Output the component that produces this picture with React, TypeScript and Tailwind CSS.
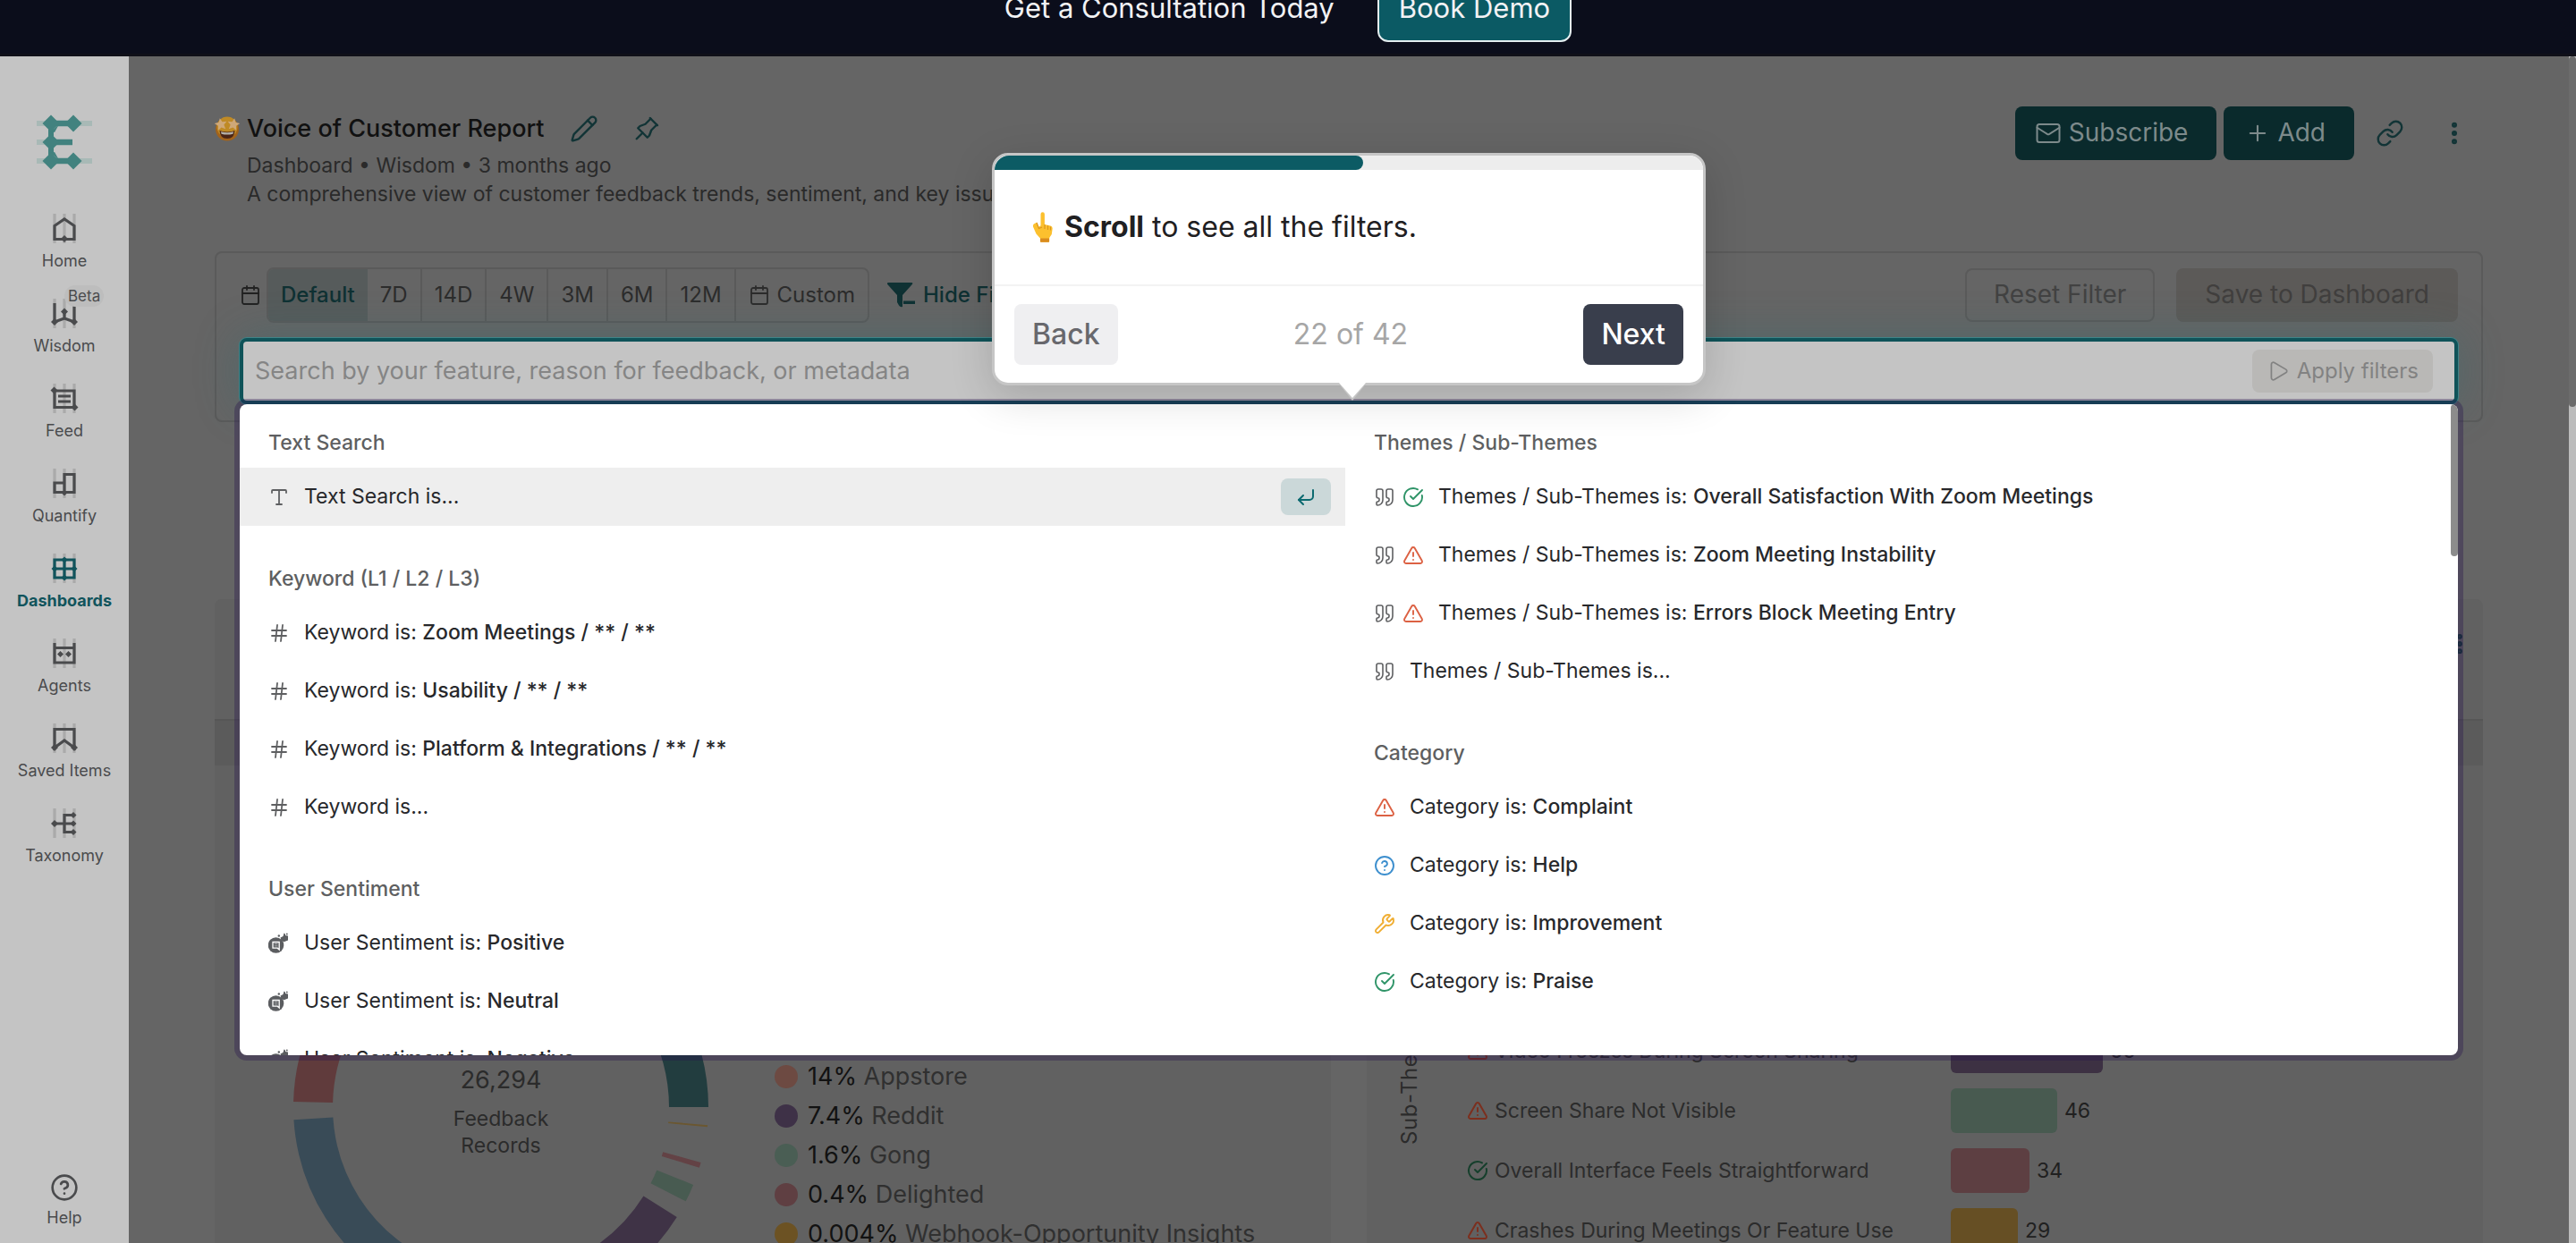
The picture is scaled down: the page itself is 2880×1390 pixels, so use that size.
import React from "react";
import {
  Calendar,
  CircleCheckBig,
  CircleQuestionMark,
  CornerDownLeft,
  EllipsisVertical,
  Hash,
  Link,
  Mail,
  Pencil,
  Play,
  Plus,
  Quote,
  TriangleAlert,
  Type,
  Wrench,
} from "lucide-react";
import { TbPin } from "react-icons/tb";

/* ---------- icons ---------- */

function Diamond({ x, y, r = 4 }: { x: number; y: number; r?: number }) {
  return <path d={`M${x} ${y - r}L${x + r} ${y}L${x} ${y + r}L${x - r} ${y}Z`} fill="currentColor" stroke="none" />;
}

function GuideIcon({ children }: { children: React.ReactNode }) {
  return (
    <svg viewBox="0 0 36 36" className="size-9" fill="none" stroke="currentColor" strokeWidth="3.2" aria-hidden="true">
      <path d="M7 1V34M18 1V34M29 1V34" stroke="#aaaaaa" />
      {children}
    </svg>
  );
}

const navItems: { label: string; active?: boolean; badge?: string; icon: React.ReactNode }[] = [
  {
    label: "Home",
    icon: (
      <GuideIcon>
        <path d="M7 29.5V14.5L18 7L29 14.5V29.5Z" />
        <Diamond x={18} y={29} />
      </GuideIcon>
    ),
  },
  {
    label: "Wisdom",
    badge: "Beta",
    icon: (
      <GuideIcon>
        <path d="M7 6V27L18 23L29 27V6M18 16V24" />
        <Diamond x={7} y={27} />
        <Diamond x={29} y={27} />
        <Diamond x={18} y={15.5} />
      </GuideIcon>
    ),
  },
  {
    label: "Feed",
    icon: (
      <GuideIcon>
        <path d="M7 9H29V27.5H7ZM11 15H25M11 21H25" />
        <Diamond x={6.5} y={8.5} />
        <Diamond x={29.5} y={27.5} />
      </GuideIcon>
    ),
  },
  {
    label: "Quantify",
    icon: (
      <GuideIcon>
        <path d="M18 17H7V27.5H29V7.5H18V27.5" />
        <Diamond x={18} y={28.5} r={3} />
      </GuideIcon>
    ),
  },
  {
    label: "Dashboards",
    active: true,
    icon: (
      <GuideIcon>
        <path d="M7 8H29V28H7ZM7 18H29M18 8V28" />
        <Diamond x={7} y={18} r={3.5} />
        <Diamond x={29} y={18} r={3.5} />
        <Diamond x={18} y={8} r={3.5} />
        <Diamond x={18} y={28} r={3.5} />
      </GuideIcon>
    ),
  },
  {
    label: "Agents",
    icon: (
      <GuideIcon>
        <path d="M7 6V28H29V6M7 11.5H29" />
        <Diamond x={13.5} y={18.5} r={3.5} />
        <Diamond x={22.5} y={18.5} r={3.5} />
      </GuideIcon>
    ),
  },
  {
    label: "Saved Items",
    icon: (
      <GuideIcon>
        <path d="M7 28V7.5H29V28L18 20Z" />
        <Diamond x={7} y={28} />
        <Diamond x={29} y={28} />
      </GuideIcon>
    ),
  },
  {
    label: "Taxonomy",
    icon: (
      <GuideIcon>
        <path d="M7 18H29M29 8.5H18V27.5H29" />
        <Diamond x={7} y={18} />
        <Diamond x={28} y={8.5} r={3.5} />
        <Diamond x={28} y={18} r={3.5} />
        <Diamond x={28} y={27.5} r={3.5} />
      </GuideIcon>
    ),
  },
];

function Logo() {
  return (
    <svg viewBox="0 0 62 62" className="h-[62px] w-[62px] text-[#42827f]" fill="none" stroke="currentColor" aria-label="Enterpret" role="img">
      <path d="M0 10H62M0 31H16M0 52H62" stroke="#a8b9b6" strokeWidth="6" />
      <path d="M16 10H40M16 31H40M16 52H40" strokeWidth="6.5" />
      <path d="M16 10V52" strokeWidth="6" />
      <path d="M16 19L25 11L20 20ZM16 43L25 51L20 42Z" fill="currentColor" stroke="none" />
      <Diamond x={16} y={10} r={9.5} />
      <Diamond x={41} y={10} r={9.5} />
      <Diamond x={16} y={31} r={9.5} />
      <Diamond x={16} y={52} r={9.5} />
      <Diamond x={41} y={52} r={9.5} />
    </svg>
  );
}

function StarStruck() {
  const star = "M0-6L1.7-2.2L6-1.8L2.8 1L3.7 5.2L0 3L-3.7 5.2L-2.8 1L-6-1.8L-1.7-2.2Z";
  return (
    <svg viewBox="0 0 28 28" className="size-7 shrink-0" aria-hidden="true">
      <circle cx="14" cy="14.5" r="13" fill="#a2631b" />
      <circle cx="14" cy="12" r="11.5" fill="#bf8a25" />
      <path d="M5.5 16Q14 19 22.500 16Q22 25 14 25Q6 25 5.500 16Z" fill="#4a2415" />
      <path d="M7 17.200Q14 19.500 21 17.200L20.500 19.700Q14 21.500 7.500 19.700Z" fill="#b4b0a8" />
      <path d={star} transform="translate(7 9) rotate(-10) scale(1.15)" fill="#cfa878" />
      <path d={star} transform="translate(21 9) rotate(10) scale(1.15)" fill="#cfa878" />
    </svg>
  );
}

function PointingHand() {
  return (
    <svg viewBox="0 0 24 36" className="h-9 w-6 shrink-0" aria-hidden="true">
      <path d="M9.5 3.5a2.2 2.2 0 0 1 4.4 0V15l6.5 1.5q2.6.6 2.2 3.5l-.8 6-2.6 4v4q0 .8-.8.8h-8.600q-.8 0-.8-.8v-3.400L4.500 25.500 1.200 18q-.8-2.200.6-3.600l3.300-1.600 2.400 5 2-1.500Z" fill="#fcc02e" />
      <path d="M9 34v-3.400h10V34q0 .8-.8.8H9.800Q9 34.800 9 34Z" fill="#d98b1e" />
      <path d="M14 15v5M17.500 16v5M20.500 17.500v4M5 13l2.500 6.500L11 18" stroke="#d99520" strokeWidth="1.200" fill="none" />
    </svg>
  );
}

function ClearFilter() {
  return (
    <svg viewBox="0 0 32 28" className="h-7 w-8 shrink-0" fill="currentColor" aria-hidden="true">
      <path d="M1 0H27Q29 0 28 1.800L17 14V27Q14.500 28 13 25.500L11 22V14L0 1.800Q-.5 0 1 0Z" />
      <path d="M18 20.500H31V24H18Z" />
    </svg>
  );
}

function SentimentIcon() {
  return (
    <svg viewBox="0 0 24 24" className="size-6" aria-hidden="true">
      <circle cx="8.500" cy="14" r="8.800" fill="#5b5d60" />
      <path d="M5 10.500h7.200v8.500l-2-1.800H5Z" fill="none" stroke="#fff" strokeWidth="1.300" />
      <path d="M6.800 12.500h3.600M6.800 14.800h3.600" stroke="#b4b5b7" strokeWidth=".9" />
      <path d="M13.500 5.500l3-1.500L17.500.5q1.800 0 1.600 2.500L22 3.500v5l-4.500 1.800-3-1.300Z" fill="#5b5d60" />
      <circle cx="11.800" cy="3.500" r="1.200" fill="#5b5d60" />
      <circle cx="20.800" cy="1.500" r=".9" fill="#5b5d60" />
    </svg>
  );
}

const hash = <Hash className="size-6 text-[#5e5f61]" strokeWidth={1.8} />;
const quote = <Quote className="size-6 text-[#5e5f61]" strokeWidth={1.6} />;
const praise = <CircleCheckBig className="size-6 text-[#2f9468]" strokeWidth={1.9} />;
const complaint = <TriangleAlert className="size-6 text-[#dc6143]" strokeWidth={1.9} />;

/* ---------- filter menu ---------- */

type Option = { icons: React.ReactNode[]; field: string; value?: string; active?: boolean };
type Group = { title: string; options: Option[] };

const leftGroups: Group[] = [
  {
    title: "Text Search",
    options: [{ icons: [<Type className="size-6 text-[#5e5f61]" strokeWidth={1.8} />], field: "Text Search is...", active: true }],
  },
  {
    title: "Keyword (L1 / L2 / L3)",
    options: [
      { icons: [hash], field: "Keyword is: ", value: "Zoom Meetings / ** / **" },
      { icons: [hash], field: "Keyword is: ", value: "Usability / ** / **" },
      { icons: [hash], field: "Keyword is: ", value: "Platform & Integrations / ** / **" },
      { icons: [hash], field: "Keyword is..." },
    ],
  },
  {
    title: "User Sentiment",
    options: [
      { icons: [<SentimentIcon />], field: "User Sentiment is: ", value: "Positive" },
      { icons: [<SentimentIcon />], field: "User Sentiment is: ", value: "Neutral" },
      { icons: [<SentimentIcon />], field: "User Sentiment is: ", value: "Negative" },
    ],
  },
];

const rightGroups: Group[] = [
  {
    title: "Themes / Sub-Themes",
    options: [
      { icons: [quote, praise], field: "Themes / Sub-Themes is: ", value: "Overall Satisfaction With Zoom Meetings" },
      { icons: [quote, complaint], field: "Themes / Sub-Themes is: ", value: "Zoom Meeting Instability" },
      { icons: [quote, complaint], field: "Themes / Sub-Themes is: ", value: "Errors Block Meeting Entry" },
      { icons: [quote], field: "Themes / Sub-Themes is..." },
    ],
  },
  {
    title: "Category",
    options: [
      { icons: [complaint], field: "Category is: ", value: "Complaint" },
      { icons: [<CircleQuestionMark className="size-6 text-[#3d8fce]" strokeWidth={1.9} />], field: "Category is: ", value: "Help" },
      { icons: [<Wrench className="size-6 text-[#f0ae33]" strokeWidth={1.9} />], field: "Category is: ", value: "Improvement" },
      { icons: [praise], field: "Category is: ", value: "Praise" },
    ],
  },
];

function GroupColumn({ groups }: { groups: Group[] }) {
  return (
    <div className="flex flex-1 flex-col gap-8 pt-4">
      {groups.map((g) => (
        <section key={g.title}>
          <h3 className="px-8 leading-[55px] font-medium text-[#5e5f61]">{g.title}</h3>
          <ul>
            {g.options.map((o, i) => (
              <li key={i}>
                <button
                  type="button"
                  className={
                    o.active
                      ? "flex h-[65px] w-full items-center gap-4 bg-[#eeeeee] pr-4 pl-8 text-left"
                      : "flex h-[65px] w-full items-center gap-4 pr-4 pl-8 text-left"
                  }
                >
                  <span className="flex gap-2">
                    {o.icons.map((icon, k) => (
                      <React.Fragment key={k}>{icon}</React.Fragment>
                    ))}
                  </span>
                  <span className="flex-1 whitespace-pre text-[#27282b]">
                    {o.field}
                    {o.value && <span className="font-medium">{o.value}</span>}
                  </span>
                  {o.active && (
                    <span className="flex h-[41px] w-14 items-center justify-center rounded-lg bg-[#cbd8d9] text-[#0c6a70]">
                      <CornerDownLeft className="size-6" strokeWidth={2} />
                    </span>
                  )}
                </button>
              </li>
            ))}
          </ul>
        </section>
      ))}
    </div>
  );
}

function FilterMenu() {
  return (
    <div className="absolute inset-x-0 top-full z-10 h-[728px] rounded-lg bg-white text-[23px] shadow-[0_0_0_6px_rgba(40,20,78,0.35)]">
      <div className="flex h-full overflow-hidden rounded-lg">
        <GroupColumn groups={leftGroups} />
        <GroupColumn groups={rightGroups} />
        <div className="w-2 shrink-0">
          <div className="h-[170px] rounded-full bg-[#8c8c8c]" />
        </div>
      </div>
    </div>
  );
}

/* ---------- tour tooltip ---------- */

function TourTooltip() {
  return (
    <div
      role="dialog"
      aria-label="Tour step"
      className="absolute bottom-[21px] left-1/2 z-20 w-[798px] -translate-x-1/2 rounded-[18px] border-[3px] border-[#c6c6c6] bg-white shadow-[0_12px_48px_rgba(0,0,0,0.16)]"
    >
      <div className="h-4 overflow-hidden rounded-t-2xl bg-[#ededed]">
        <div className="h-4 w-[52%] rounded-r-lg bg-[#0c5b64]" />
      </div>
      <p className="flex h-[130px] items-center gap-3 border-b-2 border-[#f3f3f3] px-[42px] text-[32px] text-[#1f2022]">
        <PointingHand />
        <span>
          <b className="font-bold">Scroll</b> to see all the filters.
        </span>
      </p>
      <div className="flex items-center justify-between px-[22px] py-5 text-[32px]">
        <button type="button" className="h-17 rounded-lg bg-[#efeff1] px-5 font-medium text-[#68686d]">
          Back
        </button>
        <span className="text-[#a6a6a6]">22 of 42</span>
        <button type="button" className="h-17 rounded-lg bg-[#393e4c] px-5 font-medium text-white">
          Next
        </button>
      </div>
      <svg viewBox="0 0 32 20" className="absolute top-full left-1/2 h-5 w-8 -translate-x-3" aria-hidden="true">
        <path d="M0 0L16 20L32 0Z" fill="#c6c6c6" />
        <path d="M1 0L16 17L31 0Z" fill="#fff" />
      </svg>
    </div>
  );
}

/* ---------- widgets ---------- */

const CX = 232;
const pt = (r: number, deg: number) => {
  const a = (deg * Math.PI) / 180;
  return `${CX + r * Math.cos(a)} ${CX + r * Math.sin(a)}`;
};
const segment = (a: number, b: number) =>
  `M${pt(232, a)}A232 232 0 0 1 ${pt(232, b)}L${pt(188, b)}A188 188 0 0 0 ${pt(188, a)}Z`;

const slices = [
  { a: -60, b: 0, fill: "#223d3f" },
  { a: 5, b: 5.5, fill: "#6b5730" },
  { a: 15.5, b: 17, fill: "#634245" },
  { a: 22, b: 27, fill: "#485b51" },
  { a: 32, b: 58, fill: "#3f3346" },
  { a: 63, b: 94, fill: "#6b473f" },
  { a: 99, b: 176.5, fill: "#394b57" },
  { a: 181.5, b: 230, fill: "#603b3c" },
];

const legend = [
  { pct: "14%", name: "Appstore", dot: "bg-[#6d4a42]" },
  { pct: "7.4%", name: "Reddit", dot: "bg-[#3e3147]" },
  { pct: "1.6%", name: "Gong", dot: "bg-[#4a5e54]" },
  { pct: "0.4%", name: "Delighted", dot: "bg-[#5f3f42]" },
  { pct: "0.004%", name: "Webhook-Opportunity Insights", dot: "bg-[#6c5223]" },
];

const bars = [
  { label: "Video Freezes During Screen Sharing", value: 66, good: false, fill: "bg-[#3d3143]" },
  { label: "Screen Share Not Visible", value: 46, good: false, fill: "bg-[#485a50]" },
  { label: "Overall Interface Feels Straightforward", value: 34, good: true, fill: "bg-[#5d3f42]" },
  { label: "Crashes During Meetings Or Feature Use", value: 29, good: false, fill: "bg-[#664f24]" },
];

function Widget({ children }: { children: React.ReactNode }) {
  return (
    <section className="h-[900px] min-w-0 flex-1 rounded-t-lg bg-[#616161]">
      <div className="flex h-[134px] items-start justify-end px-3 pt-9">
        <button type="button" aria-label="Widget options" className="text-[#123436]">
          <EllipsisVertical className="size-7" strokeWidth={3} />
        </button>
      </div>
      <div className="h-[52px] border-t-2 border-[#565656] bg-[#5b5b5b]" />
      {children}
    </section>
  );
}

function SourceWidget() {
  return (
    <Widget>
      <div className="flex items-start pt-[150px] pl-[88px]">
        <div className="relative size-[464px] shrink-0">
          <svg viewBox="0 0 464 464" className="size-full" aria-hidden="true">
            {slices.map((s) => (
              <path key={s.a} d={segment(s.a, s.b)} fill={s.fill} />
            ))}
          </svg>
          <div className="absolute inset-x-0 top-[182px] text-center text-[#2b2b2b]">
            <div className="text-[27px] leading-10">26,294</div>
            <div className="mt-2 text-[23px] leading-[30px]">
              Feedback
              <br />
              Records
            </div>
          </div>
        </div>
        <ul className="mt-[176px] ml-[74px] text-[27px] leading-[44px]">
          {legend.map((l) => (
            <li key={l.name} className="flex items-center gap-[11px] whitespace-nowrap text-[#303030]">
              <span className={`size-[26px] shrink-0 rounded-full ${l.dot}`} />
              <span>
                <span className="text-[#121212]">{l.pct}</span> {l.name}
              </span>
            </li>
          ))}
        </ul>
      </div>
    </Widget>
  );
}

function ThemesWidget() {
  return (
    <Widget>
      <div className="flex items-start gap-[52px] pt-[294px] pl-9 text-[23px]">
        <div className="h-[130px] w-6 rotate-180 text-2xl leading-6 tracking-wide whitespace-nowrap text-[#2b2b2b] [writing-mode:vertical-rl]">
          Sub-Themes
        </div>
        <ul className="flex flex-1 flex-col gap-[17px]">
          {bars.map((b) => (
            <li key={b.label} className="flex h-[50px] items-center">
              <span className="flex w-[541px] items-center gap-[7px] text-[#2c2c2c]">
                {b.good ? (
                  <CircleCheckBig className="size-6 text-[#163f2c]" strokeWidth={2} />
                ) : (
                  <TriangleAlert className="size-6 text-[#7c2f1e]" strokeWidth={2} />
                )}
                {b.label}
              </span>
              <span className={`h-full rounded-md ${b.fill}`} style={{ width: Math.round(b.value * 2.58) }} />
              <span className="ml-2 text-[#202020]">{b.value}</span>
            </li>
          ))}
        </ul>
      </div>
    </Widget>
  );
}

/* ---------- page ---------- */

const ranges = ["Default", "7D", "14D", "4W", "3M", "6M", "12M"];

export default function App() {
  return (
    <div className="flex h-screen flex-col overflow-hidden bg-[#656565] font-[Inter,sans-serif] text-2xl">
      <header className="flex h-[63px] shrink-0 items-end justify-center gap-12 overflow-hidden border-b-[3px] border-[#101018] bg-[#0b0d1b] pb-[13px] text-[31px] text-[#f2f2f4]">
        <span className="leading-[76px]">Get a Consultation Today</span>
        <button type="button" className="h-19 shrink-0 rounded-xl border-2 border-[#e4eef0] bg-[#0b5a64] px-[22px]">
          Book Demo
        </button>
      </header>

      <div className="flex min-h-0 flex-1">
        <aside className="flex w-36 shrink-0 flex-col items-center bg-[#c4c4c4] pt-[65px] pb-4 text-lg leading-6 text-[#4a4b4d]">
          <Logo />
          <nav className="mt-12 flex flex-col items-center gap-[29px]">
            {navItems.map((n) => (
              <a
                key={n.label}
                href="#"
                className={
                  n.active
                    ? "relative flex flex-col items-center gap-1.5 font-bold text-[#11545c]"
                    : "relative flex flex-col items-center gap-1.5"
                }
              >
                {n.icon}
                {n.badge && (
                  <span className="absolute -top-3.5 left-1/2 rounded-xl bg-[#bdbdbd] px-1 text-[17px] leading-6">{n.badge}</span>
                )}
                <span className="whitespace-nowrap">{n.label}</span>
              </a>
            ))}
          </nav>
          <a href="#" className="mt-auto flex flex-col items-center gap-1.5">
            <CircleQuestionMark className="size-8" strokeWidth={2} />
            Help
          </a>
        </aside>

        <main className="flex min-w-0 flex-1 flex-col overflow-hidden px-24 pt-14">
          <div className="flex items-start justify-between pb-12">
            <div>
              <div className="flex h-[50px] items-center">
                <StarStruck />
                <h1 className="ml-2 text-[27px] font-medium text-[#111111]">Voice of Customer Report</h1>
                <button type="button" aria-label="Rename" className="ml-7 text-[#123436]">
                  <Pencil className="size-8" strokeWidth={1.8} />
                </button>
                <button type="button" aria-label="Pin" className="ml-9 text-[#123436]">
                  <TbPin className="size-9" strokeWidth={1.6} />
                </button>
              </div>
              <div className="pl-9 text-[23px] leading-8 text-[#2a2a2a]">
                <p>Dashboard • Wisdom • 3 months ago</p>
                <p>A comprehensive view of customer feedback trends, sentiment, and key issues</p>
              </div>
            </div>
            <div className="flex items-center text-[28px] text-[#7d8a8b]">
              <button type="button" className="flex h-15 items-center gap-2 rounded-lg bg-[#0a2a2c] pr-8 pl-[22px]">
                <Mail className="size-[30px]" strokeWidth={1.6} />
                Subscribe
              </button>
              <button type="button" className="ml-2 flex h-15 items-center gap-2 rounded-lg bg-[#0a2a2c] pr-8 pl-6">
                <Plus className="size-7" strokeWidth={1.8} />
                Add
              </button>
              <button type="button" aria-label="Copy link" className="ml-6 text-[#123436]">
                <Link className="size-8" strokeWidth={1.8} />
              </button>
              <button type="button" aria-label="More" className="mr-4 ml-10 text-[#123436]">
                <EllipsisVertical className="size-8" strokeWidth={2.5} />
              </button>
            </div>
          </div>

          <section className="flex flex-col gap-[17px] rounded-lg border-2 border-[#5a5a5a] px-[26px] pt-4 pb-[18px]">
            <div className="flex items-center">
              <Calendar className="size-6 text-[#222222]" strokeWidth={1.8} />
              <div className="ml-1.5 flex h-[62px] overflow-hidden rounded-lg border-2 border-[#5a5a5a] text-[#2c2c2c]">
                {ranges.map((r, i) => (
                  <button
                    key={r}
                    type="button"
                    className={
                      i === 0
                        ? "bg-[#565b5b] px-3.5 font-medium text-[#0f3133]"
                        : "border-r-2 border-[#5a5a5a] px-3.5"
                    }
                  >
                    {r}
                  </button>
                ))}
                <button type="button" className="flex items-center gap-2 px-3.5">
                  <Calendar className="size-6" strokeWidth={1.8} />
                  Custom
                </button>
              </div>
              <button type="button" className="ml-5 flex items-center gap-2 font-medium text-[#0f3133]">
                <ClearFilter />
                Hide Filters
              </button>
              <button type="button" className="ml-auto h-15 rounded-lg border-2 border-[#5a5a5a] px-[30px] text-[28px] text-[#424242]">
                Reset Filter
              </button>
              <button type="button" className="ml-6 h-15 rounded-lg bg-[#5c5a58] px-8 text-[28px] text-[#413f3e]">
                Save to Dashboard
              </button>
            </div>

            <div className="relative">
              <div className="flex h-[74px] items-center rounded-lg border-4 border-[#0f5359] bg-[#c4c4c4] pr-6 pl-[13px] shadow-[0_0_0_1px_#3f8387,0_0_48px_rgba(50,110,115,0.4)]">
                <input
                  type="text"
                  aria-label="Search filters"
                  placeholder="Search by your feature, reason for feedback, or metadata"
                  className="min-w-0 flex-1 bg-transparent text-[27px] outline-none placeholder:text-[#858585]"
                />
                <button type="button" className="flex h-12 items-center gap-2 rounded-lg bg-[#b9b8b6] px-4 text-[#828282]">
                  <Play className="size-[26px]" strokeWidth={1.6} />
                  Apply filters
                </button>
              </div>
              <FilterMenu />
              <TourTooltip />
            </div>
          </section>

          <div className="mt-[198px] flex gap-10">
            <SourceWidget />
            <ThemesWidget />
          </div>
        </main>
        <div className="w-2 shrink-0 bg-[#bcbcbc]">
          <div className="h-[392px] rounded-full bg-[#6c6c6c]" />
        </div>
      </div>
    </div>
  );
}
